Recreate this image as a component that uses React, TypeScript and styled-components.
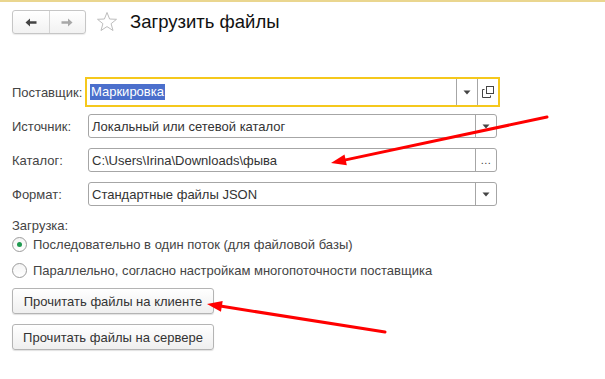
import React from "react";
import styled, { createGlobalStyle } from "styled-components";

const Global = createGlobalStyle`
  html, body { margin: 0; padding: 0; background: #fff; }
  body { font-family: "Liberation Sans", Arial, sans-serif; font-size: 13px; color: #444; }
  #root { position: relative; width: 605px; height: 379px; overflow: hidden; }
`;

const Page = styled.div`
  position: relative;
  width: 605px;
  height: 379px;
  border-top: 2px solid #ead68f;
  box-sizing: border-box;
`;

const Header = styled.div`
  display: flex;
  align-items: center;
  padding: 8px 0 0 12px;
  height: 24px;
`;

const NavGroup = styled.div`
  display: flex;
  width: 74px;
  height: 24px;
  box-sizing: border-box;
  border: 1px solid #c6c6c6;
  border-radius: 3px;
  background: linear-gradient(#ffffff, #f2f2f2);
  box-shadow: 0 1px 1px rgba(0, 0, 0, 0.08);
`;

const NavButton = styled.div<{ $divider?: boolean }>`
  flex: 1;
  display: flex;
  align-items: center;
  justify-content: center;
  border-left: ${(p) => (p.$divider ? "1px solid #d4d4d4" : "none")};
`;

const StarBox = styled.div`
  display: flex;
  margin-left: 10px;
  width: 22px;
  height: 22px;
`;

const Title = styled.div`
  margin-left: 12px;
  font-size: 18.5px;
  color: #111;
  line-height: 26px;
`;

const Form = styled.div`
  display: flex;
  flex-direction: column;
  gap: 10px;
  margin-top: 46px;
  padding-left: 12px;
`;

const Row = styled.div`
  display: flex;
  align-items: center;
  height: 24px;
`;

const Label = styled.div`
  width: 73px;
  color: #444;
  white-space: nowrap;
`;

const Field = styled.div<{ $focused?: boolean }>`
  display: flex;
  box-sizing: border-box;
  width: ${(p) => (p.$focused ? "415px" : "409px")};
  height: ${(p) => (p.$focused ? "30px" : "24px")};
  margin-left: ${(p) => (p.$focused ? "0" : "3px")};
  border: ${(p) => (p.$focused ? "2px solid #f5c81c" : "1px solid #a6a6a6")};
  border-radius: ${(p) => (p.$focused ? "0" : "3px")};
  background: #fff;
`;

const Value = styled.div`
  flex: 1;
  display: flex;
  align-items: center;
  padding-left: 3px;
  color: #333;
  white-space: nowrap;
`;

const Selected = styled.span`
  background: #4b6fcc;
  color: #fff;
  line-height: 16px;
  padding: 0 1px;
`;

const FieldButton = styled.div`
  width: 20px;
  display: flex;
  align-items: center;
  justify-content: center;
  border-left: 1px solid #a6a6a6;
  color: #444;
  font-size: 11px;
  letter-spacing: 0.5px;
`;

const Section = styled.div`
  display: flex;
  flex-direction: column;
  padding-left: 12px;
  margin-top: 12px;
`;

const SectionLabel = styled.div`
  line-height: 16px;
  color: #444;
`;

const RadioRow = styled.div`
  display: flex;
  align-items: center;
  height: 20px;
  margin-top: ${(p: { $first?: boolean }) => (p.$first ? "0" : "6px")};
  color: #444;
`;

const RadioCircle = styled.div<{ $checked?: boolean }>`
  width: 15px;
  height: 15px;
  box-sizing: border-box;
  border-radius: 50%;
  border: 1px solid #9c9c9c;
  background: linear-gradient(#f4f4f4, #ffffff);
  display: flex;
  align-items: center;
  justify-content: center;
  margin-right: 6px;
  &::after {
    content: "";
    display: ${(p) => (p.$checked ? "block" : "none")};
    width: 5px;
    height: 5px;
    border-radius: 50%;
    background: #1f9a50;
  }
`;

const Button = styled.div<{ $first?: boolean }>`
  width: 202px;
  height: 26px;
  box-sizing: border-box;
  margin-top: ${(p) => (p.$first ? "8px" : "10px")};
  border: 1px solid #b4b4b4;
  border-radius: 3px;
  background: linear-gradient(#ffffff, #efefef);
  box-shadow: 0 1px 1px rgba(0, 0, 0, 0.12);
  display: flex;
  align-items: center;
  justify-content: center;
  color: #333;
`;

const Overlay = styled.svg`
  position: absolute;
  left: 0;
  top: -2px;
  pointer-events: none;
`;

const Tri = () => (
  <svg width="8" height="5" viewBox="0 0 8 5">
    <path d="M0.5 0.5 H7.5 L4 4.5 Z" fill="#444" />
  </svg>
);

const OpenIcon = () => (
  <svg width="12" height="12" viewBox="0 0 12 12">
    <rect x="4.5" y="0.5" width="7" height="7" fill="none" stroke="#444" />
    <path d="M2.5 3.5 H0.5 V11.5 H8.5 V9.5" fill="none" stroke="#444" />
  </svg>
);

const arrowHead = (x1: number, y1: number, x2: number, y2: number) => {
  const ang = Math.atan2(y2 - y1, x2 - x1);
  const len = 15;
  const w = 5.5;
  const bx = x2 - len * Math.cos(ang);
  const by = y2 - len * Math.sin(ang);
  const px = -Math.sin(ang) * w;
  const py = Math.cos(ang) * w;
  return {
    pts: `${x2},${y2} ${bx + px},${by + py} ${bx - px},${by - py}`,
    bx,
    by,
  };
};

const RedArrow = ({ x1, y1, x2, y2 }: { x1: number; y1: number; x2: number; y2: number }) => {
  const h = arrowHead(x1, y1, x2, y2);
  return (
    <g>
      <line x1={x1} y1={y1} x2={h.bx} y2={h.by} stroke="#f00" strokeWidth="3" strokeLinecap="round" />
      <polygon points={h.pts} fill="#f00" />
    </g>
  );
};

export default function App() {
  return (
    <>
      <Global />
      <Page>
        <Header>
          <NavGroup>
            <NavButton>
              <svg width="12" height="9" viewBox="0 0 12 9">
                <path d="M0.5 4.5 L5 0.5 V3.2 H11.5 V5.8 H5 V8.5 Z" fill="#444" />
              </svg>
            </NavButton>
            <NavButton $divider>
              <svg width="12" height="9" viewBox="0 0 12 9">
                <path d="M11.5 4.5 L7 0.5 V3.2 H0.5 V5.8 H7 V8.5 Z" fill="#a8a8a8" />
              </svg>
            </NavButton>
          </NavGroup>
          <StarBox>
            <svg width="22" height="22" viewBox="0 0 22 22">
              <path
                d="M11 1.5 L13.6 8 L20.5 8.3 L15.1 12.7 L17 19.5 L11 15.6 L5 19.5 L6.9 12.7 L1.5 8.3 L8.4 8 Z"
                fill="none"
                stroke="#bdbdbd"
                strokeWidth="1"
                strokeLinejoin="round"
              />
            </svg>
          </StarBox>
          <Title>Загрузить файлы</Title>
        </Header>

        <Form>
          <Row>
            <Label>Поставщик:</Label>
            <Field $focused>
              <Value>
                <Selected>Маркировка</Selected>
              </Value>
              <FieldButton>
                <Tri />
              </FieldButton>
              <FieldButton>
                <OpenIcon />
              </FieldButton>
            </Field>
          </Row>
          <Row>
            <Label>Источник:</Label>
            <Field>
              <Value>Локальный или сетевой каталог</Value>
              <FieldButton>
                <Tri />
              </FieldButton>
            </Field>
          </Row>
          <Row>
            <Label>Каталог:</Label>
            <Field>
              <Value>C:\Users\Irina\Downloads\фыва</Value>
              <FieldButton>...</FieldButton>
            </Field>
          </Row>
          <Row>
            <Label>Формат:</Label>
            <Field>
              <Value>Стандартные файлы JSON</Value>
              <FieldButton>
                <Tri />
              </FieldButton>
            </Field>
          </Row>
        </Form>

        <Section>
          <SectionLabel>Загрузка:</SectionLabel>
          <RadioRow $first>
            <RadioCircle $checked />
            Последовательно в один поток (для файловой базы)
          </RadioRow>
          <RadioRow>
            <RadioCircle />
            Параллельно, согласно настройкам многопоточности поставщика
          </RadioRow>
          <Button $first>Прочитать файлы на клиенте</Button>
          <Button>Прочитать файлы на сервере</Button>
        </Section>

        <Overlay width="605" height="379" viewBox="0 0 605 379">
          <RedArrow x1={547} y1={117} x2={331} y2={163} />
          <RedArrow x1={385} y1={332} x2={207} y2={304} />
        </Overlay>
      </Page>
    </>
  );
}
